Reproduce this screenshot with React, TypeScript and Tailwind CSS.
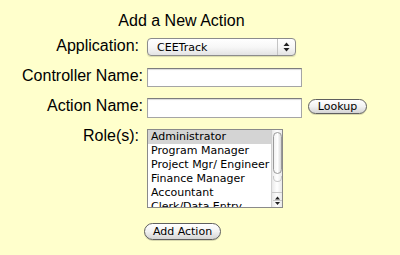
import { useState } from 'react'

const roles = [
  'Administrator',
  'Program Manager',
  'Project Mgr/ Engineer',
  'Finance Manager',
  'Accountant',
  'Clerk/Data Entry',
]

const labelCls = "w-[143px] shrink-0 text-right text-[16px] leading-[16px] text-black"
const smallFont = { fontFamily: '"DejaVu Sans", "Lucida Grande", sans-serif' }

function AquaButton({ children, className }: { children: React.ReactNode; className: string }) {
  return (
    <button
      className={`flex items-center justify-center rounded-full border border-[#5f5f5f] bg-gradient-to-b from-white via-[#f2f2f2] to-[#d4d4d4] text-[11px] leading-none text-black shadow-[0_1px_0_rgba(0,0,0,0.15)] ${className}`}
      style={smallFont}
    >
      {children}
    </button>
  )
}

export default function App() {
  const [selected] = useState(0)

  return (
    <div className="h-[255px] w-[400px] overflow-hidden bg-[#ffffcc]" style={{ fontFamily: '"Liberation Sans", Arial, sans-serif' }}>
      <h1 className="w-[363px] pt-[13px] text-center text-[16px] leading-[16px] text-black">Add a New Action</h1>

      <div className="mt-[9px] flex items-start">
        <label className={`${labelCls} pr-[4px]`}>Application:</label>
        <div className="relative ml-[4px] flex h-[18px] w-[149px] items-center rounded-[4px] border border-[#8c8c8c] bg-gradient-to-b from-white via-[#f7f7f7] to-[#e3e3e3] shadow-[0_1px_1px_rgba(0,0,0,0.15)]">
          <span className="pl-[9px] text-[11px] leading-none text-black" style={smallFont}>CEETrack</span>
          <div className="absolute right-0 top-0 flex h-full w-[18px] flex-col items-center justify-center border-l border-[#c4c4c4]">
            <svg width="7" height="10" viewBox="0 0 7 10">
              <path d="M3.5 0.5 L6.5 4 H0.5 Z" fill="#222" />
              <path d="M3.5 9.5 L6.5 6 H0.5 Z" fill="#222" />
            </svg>
          </div>
        </div>
      </div>

      <div className="mt-[12px] flex items-start">
        <label className={labelCls}>Controller Name:</label>
        <input
          type="text"
          className="ml-[4px] h-[19px] w-[155px] border border-[#a5a5a5] border-t-[#7d7d7d] bg-white shadow-[inset_0_1px_1px_rgba(0,0,0,0.15)] outline-none"
        />
      </div>

      <div className="mt-[11px] flex items-start">
        <label className={labelCls}>Action Name:</label>
        <input
          type="text"
          className="ml-[4px] h-[20px] w-[155px] border border-[#a5a5a5] border-t-[#7d7d7d] bg-white shadow-[inset_0_1px_1px_rgba(0,0,0,0.15)] outline-none"
        />
        <AquaButton className="ml-[6px] mt-[1px] h-[15px] w-[59px]">Lookup</AquaButton>
      </div>

      <div className="mt-[11px] flex items-start">
        <label className={`${labelCls} pr-[4px] -mt-[1px]`}>Role(s):</label>
        <div className="ml-[4px] flex h-[79px] w-[136px] border border-[#8a8a8a] bg-white">
          <ul className="h-full flex-1 overflow-hidden text-[11px] text-black" style={smallFont}>
            {roles.map((r, i) => (
              <li
                key={r}
                className={`h-[14px] whitespace-nowrap pl-[3px] leading-[14px] ${i === selected ? 'bg-[#d4d4d4]' : ''}`}
              >
                {r}
              </li>
            ))}
          </ul>
          <div className="flex w-[11px] flex-col border-l border-[#d0d0d0] bg-gradient-to-r from-[#e9e9e9] via-white to-[#e9e9e9]">
            <div className="mx-auto mt-[2px] h-[42px] w-[9px] rounded-full border border-[#9a9a9a] bg-gradient-to-r from-[#f2f2f2] via-white to-[#d8d8d8]" />
            <div className="mx-auto mt-[2px] h-[6px] w-[9px] rounded-b-full border border-t-0 border-[#c8c8c8]" />
            <div className="mt-auto flex flex-col items-center border-t border-[#c8c8c8]">
              <svg width="9" height="14" viewBox="0 0 9 14">
                <path d="M4.5 3.5 L7 6.5 H2 Z" fill="#222" />
                <line x1="0" y1="7.5" x2="9" y2="7.5" stroke="#c8c8c8" />
                <path d="M4.5 12 L7 9 H2 Z" fill="#222" />
              </svg>
            </div>
          </div>
        </div>
      </div>

      <div className="mt-[15px] pl-[144px]">
        <AquaButton className="h-[17px] w-[77px]">Add Action</AquaButton>
      </div>
    </div>
  )
}
